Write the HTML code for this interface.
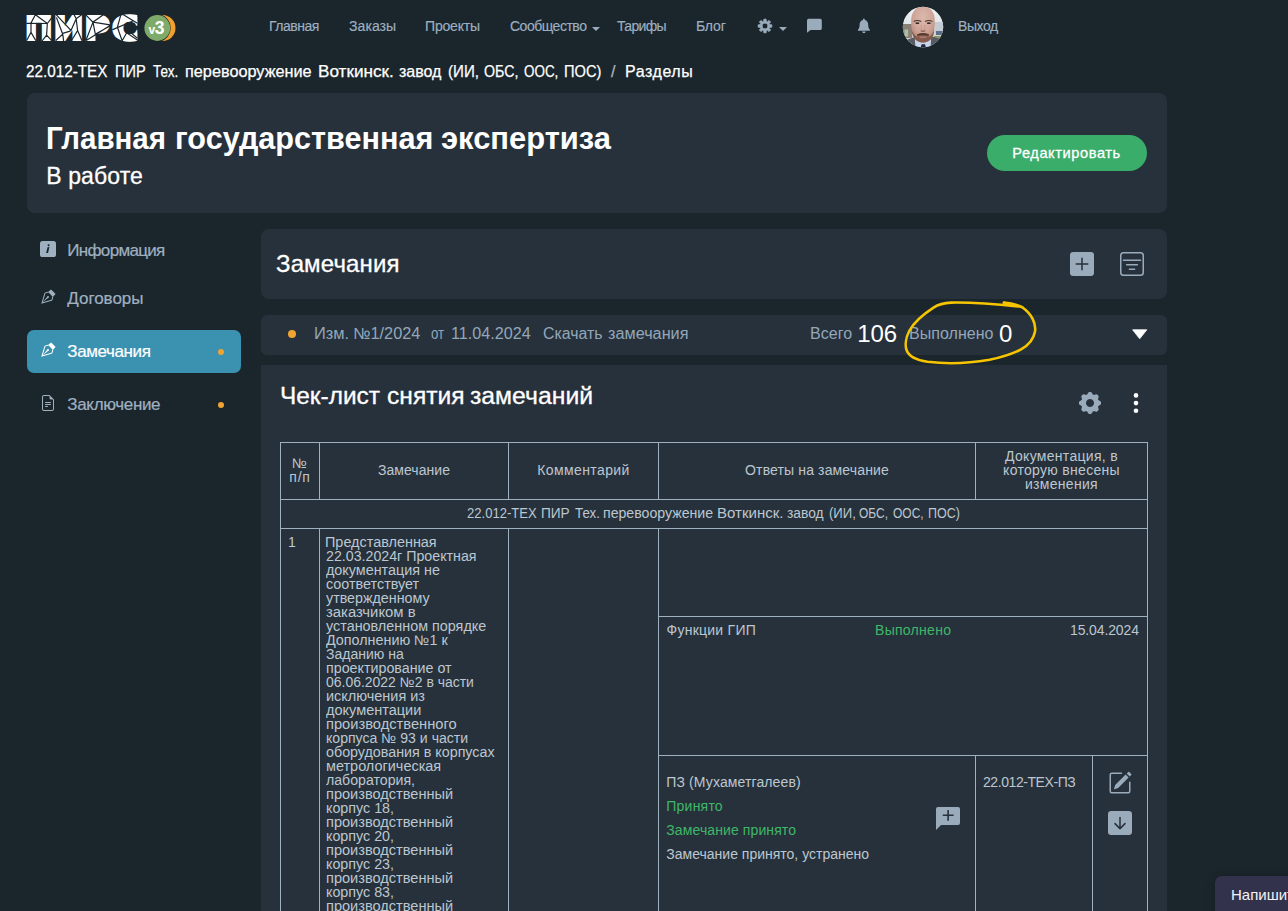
<!DOCTYPE html>
<html lang="ru">
<head>
<meta charset="utf-8">
<title>ПИРС — Замечания</title>
<style>
*{box-sizing:border-box;margin:0;padding:0}
html,body{width:1288px;height:911px;overflow:hidden;background:#1b262c}
body{position:relative;font-family:"Liberation Sans",sans-serif;color:#fff;font-size:14px}
.abs{position:absolute;white-space:nowrap}
.panel{position:absolute;background:#27313b}
/* nav */
.nav a{position:absolute;top:18px;font-size:14px;line-height:17px;color:#9db0c2;-webkit-text-stroke:0.15px #9db0c2;text-decoration:none;white-space:nowrap}
.ico{position:absolute;overflow:visible}
/* breadcrumb */
.bc{-webkit-text-stroke:0.25px currentColor;position:absolute;top:61.6px;font-size:16px;line-height:19px;color:#fff;white-space:nowrap}
/* sidebar */
.side{position:absolute;left:67.3px;-webkit-text-stroke:0.2px currentColor;font-size:17px;line-height:20px;color:#9fb0c0;white-space:nowrap}
.dot{position:absolute;border-radius:50%;background:#f0a233}
.wg{position:absolute;left:0;width:1288px;height:0;white-space:nowrap}
.wg span{position:absolute;top:0;white-space:nowrap;display:inline-block;transform-origin:0 0}
/* table */
.ln{position:absolute;display:block;background:#9fb0be}
.tx{position:absolute;font-size:14px;line-height:14px;color:#bcc7d1;white-space:nowrap}
.tc{text-align:center}
.gr{color:#3fb768}

</style>
</head>
<body>

<!-- NAV -->
<div class="nav" id="nav">
  <a id="n1" style="letter-spacing:-0.48px;left:269px">Главная</a>
  <a id="n2" style="letter-spacing:0.08px;left:349px">Заказы</a>
  <a id="n3" style="letter-spacing:-0.18px;left:425px">Проекты</a>
  <a id="n4" style="letter-spacing:-0.49px;left:510px">Сообщество</a>
  <a id="n5" style="letter-spacing:-0.66px;left:617px">Тарифы</a>
  <a id="n6" style="letter-spacing:-0.17px;left:696px">Блог</a>
  <a id="n7" style="letter-spacing:-0.43px;left:958px">Выход</a>
</div>

<!-- BREADCRUMB -->
<div class="bc" id="bc2" style="left:611px;color:#aab6c1">/</div>
<div class="bc" id="bc3" style="letter-spacing:0.55px;left:625px">Разделы</div>

<!-- HEADER PANEL -->
<div class="panel" style="left:27px;top:93px;width:1140px;height:120px;border-radius:8px"></div>
<div class="abs" id="h2" style="-webkit-text-stroke:0.3px #fff;letter-spacing:0.1px;left:46.3px;top:162.8px;font-size:23px;line-height:26px">В работе</div>
<div class="abs" id="btn" style="letter-spacing:0.6px;-webkit-text-stroke:0.3px #fff;left:987px;top:135px;width:160px;height:36px;border-radius:18px;background:#3bad6b;text-align:center;font-size:14.6px;line-height:37px;text-indent:-1px">Редактировать</div>

<!-- SIDEBAR -->
<div class="abs" style="left:27px;top:330px;width:214px;height:43px;border-radius:7px;background:#3a92b0"></div>
<div class="side" id="s1" style="letter-spacing:-0.68px;top:241px">Информация</div>
<div class="side" id="s2" style="letter-spacing:-0.03px;top:289px">Договоры</div>
<div class="side" id="s3" style="letter-spacing:-0.39px;top:342px;color:#fff">Замечания</div>
<div class="side" id="s4" style="letter-spacing:-0.34px;top:395px">Заключение</div>
<div class="dot" style="left:218px;top:349px;width:6px;height:6px"></div>
<div class="dot" style="left:218px;top:402px;width:6px;height:6px"></div>

<!-- ЗАМЕЧАНИЯ PANEL -->
<div class="panel" style="left:261px;top:229px;width:906px;height:70px;border-radius:8px"></div>
<div class="abs" id="p1" style="-webkit-text-stroke:0.3px #fff;letter-spacing:0.14px;left:276px;top:250px;font-size:24px;line-height:28px">Замечания</div>

<!-- ROW PANEL -->
<div class="panel" style="left:261px;top:315px;width:906px;height:40px;border-radius:6px"></div>
<div class="dot" style="left:288px;top:330px;width:8px;height:8px"></div>
<div class="abs" id="r4" style="letter-spacing:0.03px;left:810px;top:324px;font-size:16px;line-height:19px;color:#93a7ba">Всего</div>
<div class="abs" id="r5" style="letter-spacing:-0.10px;left:857.3px;top:320px;font-size:24px;line-height:28px">106</div>
<div class="abs" id="r6" style="letter-spacing:0.04px;left:909px;top:324px;font-size:16px;line-height:19px;color:#93a7ba">Выполнено</div>
<div class="abs" id="r7" style="letter-spacing:-0.70px;left:999px;top:320px;font-size:24px;line-height:28px">0</div>

<!-- CHECKLIST PANEL -->
<div class="panel" style="left:261px;top:365px;width:906px;height:560px"></div>


<!-- TABLE LINES -->
<div id="tlines">
<i class="ln" style="left:280px;top:442px;width:868px;height:1px"></i>
<i class="ln" style="left:280px;top:499px;width:868px;height:1px"></i>
<i class="ln" style="left:280px;top:528px;width:868px;height:1px"></i>
<i class="ln" style="left:658px;top:616px;width:490px;height:1px"></i>
<i class="ln" style="left:658px;top:755px;width:490px;height:1px"></i>
<i class="ln" style="left:280px;top:442px;width:1px;height:480px"></i>
<i class="ln" style="left:1147px;top:442px;width:1px;height:480px"></i>
<i class="ln" style="left:319px;top:442px;width:1px;height:58px"></i>
<i class="ln" style="left:508px;top:442px;width:1px;height:58px"></i>
<i class="ln" style="left:658px;top:442px;width:1px;height:58px"></i>
<i class="ln" style="left:975px;top:442px;width:1px;height:58px"></i>
<i class="ln" style="left:319px;top:528px;width:1px;height:400px"></i>
<i class="ln" style="left:508px;top:528px;width:1px;height:400px"></i>
<i class="ln" style="left:658px;top:528px;width:1px;height:400px"></i>
<i class="ln" style="left:975px;top:755px;width:1px;height:170px"></i>
<i class="ln" style="left:1092px;top:755px;width:1px;height:170px"></i>
</div>

<!-- TABLE TEXT -->
<div class="tx tc" id="t1" style="letter-spacing:0.80px;left:281px;top:456px;width:38px">№<br>п/п</div>
<div class="tx tc" id="t2" style="letter-spacing:0.04px;left:320px;top:463px;width:188px">Замечание</div>
<div class="tx tc" id="t3" style="letter-spacing:0.39px;left:509px;top:463px;width:149px">Комментарий</div>
<div class="tx tc" id="t4" style="letter-spacing:0.14px;left:659px;top:463px;width:316px">Ответы на замечание</div>
<div class="tx tc" id="t5" style="letter-spacing:0.30px;left:976px;top:449px;width:171px">Документация, в<br>которую внесены<br>изменения</div>
<div class="tx" id="t7" style="left:288px;top:535px">1</div>
<div class="tx" id="t9" style="letter-spacing:0.25px;left:666.5px;top:623px">Функции ГИП</div>
<div class="tx gr" id="t10" style="letter-spacing:0.29px;left:875px;top:623px">Выполнено</div>
<div class="tx" id="t11" style="letter-spacing:-0.12px;left:1070px;top:623px">15.04.2024</div>
<div class="tx" id="t12" style="margin-left:-0.7px;letter-spacing:0.12px;left:667px;top:775px">ПЗ (Мухаметгалеев)</div>
<div class="tx gr" id="t13" style="margin-left:-0.7px;letter-spacing:0.22px;left:667px;top:799px">Принято</div>
<div class="tx gr" id="t14" style="margin-left:-0.7px;letter-spacing:0.10px;left:667px;top:823px">Замечание принято</div>
<div class="tx" id="t15" style="margin-left:-0.7px;left:667px;top:847px">Замечание принято, устранено</div>
<div class="tx" id="t16" style="letter-spacing:-0.43px;left:983px;top:775px">22.012-ТЕХ-ПЗ</div>


<!-- WORDS -->
<div class="wg" id="bc" style="top:61.6px;font-size:16px;line-height:19px;color:#fff;-webkit-text-stroke:0.25px #fff">
<span id="bc_0" style="left:26.00px;top:0px;transform:scaleX(0.9535)">22.012-ТЕХ</span> 
<span id="bc_1" style="left:115.00px;top:0px;transform:scaleX(0.9100)">ПИР</span> 
<span id="bc_2" style="left:153.00px;top:0px;transform:scaleX(0.8439)">Тех.</span> 
<span id="bc_3" style="left:185.00px;top:0px;transform:scaleX(1.0160)">перевооружение</span> 
<span id="bc_4" style="left:318.00px;top:0px;transform:scaleX(1.0715)">Воткинск.</span> 
<span id="bc_5" style="left:399.00px;top:0px;transform:scaleX(1.0003)">завод</span> 
<span id="bc_6" style="left:448.00px;top:0px;transform:scaleX(0.9440)">(ИИ,</span> 
<span id="bc_7" style="left:483.50px;top:0px;transform:scaleX(0.8865)">ОБС,</span> 
<span id="bc_8" style="left:523.50px;top:0px;transform:scaleX(0.8392)">ООС,</span> 
<span id="bc_9" style="left:564.00px;top:0px;transform:scaleX(0.9149)">ПОС)</span> 
</div>
<div class="wg" id="h1" style="top:119.6px;font-size:31.5px;line-height:36px;font-weight:bold;color:#fff">
<span id="h1_0" style="left:46.00px;top:0px;transform:scaleX(0.9365)">Главная</span> 
<span id="h1_1" style="left:174.50px;top:0px;transform:scaleX(0.9717)">государственная</span> 
<span id="h1_2" style="left:441.00px;top:0px;transform:scaleX(0.9811)">экспертиза</span> 
</div>
<div class="wg" id="c1" style="top:382px;font-size:23.5px;line-height:28px;color:#fff;-webkit-text-stroke:0.3px #fff">
<span id="c1_0" style="left:279.50px;top:0px;transform:scaleX(1.0396)">Чек-лист</span> 
<span id="c1_1" style="left:386.50px;top:0px;transform:scaleX(1.0467)">снятия</span> 
<span id="c1_2" style="left:470.00px;top:0px;transform:scaleX(1.0530)">замечаний</span> 
</div>
<div class="wg" id="t6" style="top:506px;font-size:14px;line-height:14px;color:#bcc7d1">
<span id="t6_0" style="left:466.50px;top:0px;transform:scaleX(0.9333)">22.012-ТЕХ</span> 
<span id="t6_1" style="left:541.00px;top:0px;transform:scaleX(0.9746)">ПИР</span> 
<span id="t6_2" style="left:574.50px;top:0px;transform:scaleX(0.9527)">Тех.</span> 
<span id="t6_3" style="left:602.50px;top:0px;transform:scaleX(1.0093)">перевооружение</span> 
<span id="t6_4" style="left:716.50px;top:0px;transform:scaleX(1.0734)">Воткинск.</span> 
<span id="t6_5" style="left:787.00px;top:0px;transform:scaleX(0.9843)">завод</span> 
<span id="t6_6" style="left:828.50px;top:0px;transform:scaleX(0.9362)">(ИИ,</span> 
<span id="t6_7" style="left:859.00px;top:0px;transform:scaleX(0.8537)">ОБС,</span> 
<span id="t6_8" style="left:892.50px;top:0px;transform:scaleX(0.8552)">ООС,</span> 
<span id="t6_9" style="left:927.50px;top:0px;transform:scaleX(0.8928)">ПОС)</span> 
</div>
<div class="wg" id="t8" style="top:535px;font-size:14px;line-height:14px;color:#bcc7d1">
<span id="t8_0" style="left:325.00px;top:0px;transform:scaleX(1.0298)">Представленная</span> 
<span id="t8_1" style="left:326.00px;top:14px;transform:scaleX(1.0149)">22.03.2024г Проектная</span> 
<span id="t8_2" style="left:326.00px;top:28px;transform:scaleX(1.0251)">документация не</span> 
<span id="t8_3" style="left:326.00px;top:42px;transform:scaleX(1.0263)">соответствует</span> 
<span id="t8_4" style="left:326.00px;top:56px;transform:scaleX(1.0195)">утвержденному</span> 
<span id="t8_5" style="left:326.00px;top:70px;transform:scaleX(1.0619)">заказчиком в</span> 
<span id="t8_6" style="left:326.00px;top:84px;transform:scaleX(1.0268)">установленном порядке</span> 
<span id="t8_7" style="left:326.00px;top:98px;transform:scaleX(1.0233)">Дополнению №1 к</span> 
<span id="t8_8" style="left:326.00px;top:112px;transform:scaleX(1.0026)">Заданию на</span> 
<span id="t8_9" style="left:326.00px;top:126px;transform:scaleX(1.0196)">проектирование от</span> 
<span id="t8_10" style="left:326.00px;top:140px;transform:scaleX(0.9973)">06.06.2022 №2 в части</span> 
<span id="t8_11" style="left:326.00px;top:154px;transform:scaleX(1.0334)">исключения из</span> 
<span id="t8_12" style="left:326.00px;top:168px;transform:scaleX(1.0370)">документации</span> 
<span id="t8_13" style="left:326.00px;top:182px;transform:scaleX(1.0481)">производственного</span> 
<span id="t8_14" style="left:326.00px;top:196px;transform:scaleX(1.0057)">корпуса № 93 и части</span> 
<span id="t8_15" style="left:326.00px;top:210px;transform:scaleX(1.0206)">оборудования в корпусах</span> 
<span id="t8_16" style="left:326.00px;top:224px;transform:scaleX(1.0324)">метрологическая</span> 
<span id="t8_17" style="left:326.00px;top:238px;transform:scaleX(1.0092)">лаборатория,</span> 
<span id="t8_18" style="left:326.00px;top:252px;transform:scaleX(1.0414)">производственный</span> 
<span id="t8_19" style="left:326.00px;top:266px;transform:scaleX(1.0212)">корпус 18,</span> 
<span id="t8_20" style="left:326.00px;top:280px;transform:scaleX(1.0414)">производственный</span> 
<span id="t8_21" style="left:326.00px;top:294px;transform:scaleX(1.0212)">корпус 20,</span> 
<span id="t8_22" style="left:326.00px;top:308px;transform:scaleX(1.0414)">производственный</span> 
<span id="t8_23" style="left:326.00px;top:322px;transform:scaleX(1.0212)">корпус 23,</span> 
<span id="t8_24" style="left:326.00px;top:336px;transform:scaleX(1.0414)">производственный</span> 
<span id="t8_25" style="left:326.00px;top:350px;transform:scaleX(1.0212)">корпус 83,</span> 
<span id="t8_26" style="left:326.00px;top:364px;transform:scaleX(1.0414)">производственный</span> 
</div>
<div class="wg" id="r1" style="top:324px;font-size:16px;line-height:19px;color:#93a7ba">
<span id="r1_0" style="left:313.50px;top:0px;transform:scaleX(1.0254)">Изм.</span> 
<span id="r1_1" style="left:352.50px;top:0px;transform:scaleX(1.0185)">№1/2024</span> 
<span id="r1_2" style="left:431.00px;top:0px;transform:scaleX(0.8266)">от</span> 
<span id="r1_3" style="left:451.00px;top:0px;transform:scaleX(1.0103)">11.04.2024</span> 
<span id="r1_4" style="left:543.00px;top:0px;transform:scaleX(0.9901)">Скачать</span> 
<span id="r1_5" style="left:608.00px;top:0px;transform:scaleX(1.0154)">замечания</span> 
</div>
<!-- /WORDS -->

<!-- ICON OVERLAY -->
<svg class="ico" id="ov" width="1288" height="911" viewBox="0 0 1288 911" style="left:0;top:0;pointer-events:none">
  <!-- logo -->
  <clipPath id="cclip"><rect x="110" y="10" width="27.3" height="36"/></clipPath>
  <g id="logo" font-family="Liberation Sans, sans-serif" font-weight="bold" font-size="30.9" fill="#fff" stroke="#fff" stroke-width="3.8" stroke-linejoin="miter">
    <text transform="translate(26.60,39.00) scale(1.1063,1.0316)">П</text>
    <text transform="translate(55.30,39.00) scale(1.2048,1.0316)">И</text>
    <text transform="translate(86.00,39.00) scale(1.1043,1.0316)">Р</text>
    <g clip-path="url(#cclip)"><text transform="translate(112.70,40.30) scale(1.4472,1.1336)" stroke-width="3.1">С</text></g>
  </g>
  <rect x="94.5" y="21.3" width="8" height="5" fill="#fff"/>
  <g id="mosaic" stroke="#1b262c" stroke-width="1.2" fill="none" stroke-linecap="round">
    <path d="M26.8,23.4L47.3,23.5 M31,23L35.4,14.7L47.3,23.5L51.5,18.2 M31,23.3L31,32.4L26.8,40.3 M31,32.4L35.6,40.3 M47.3,23.5L46.6,35.2L42.4,40.5 M46.6,35.2L51.5,40.3"/>
    <path d="M56.6,15.1L71,30.5L76.2,18.8L74.1,14.7 M56.6,17.9L62.7,34.2L56.1,40.3 M62.7,34.2L63.6,40.7 M62.7,33.3L70.1,31.2 M76.2,18.8L81.3,15.1 M76.2,18.8L77.6,30.5L72,39.8 M77.6,30.5L81.8,40.3"/>
    <path d="M86,15.1L93,22.1L103,15.1 M93,22.1L110,24.9 M93,22.1L86.2,39.8 M93,22.1L95.5,35.2 M110,25.4L86.7,40.3 M96.5,33.6L109.5,26.2"/>
    <path d="M112.7,29.6L132.3,21.2 M120.9,14.7L117.4,27.2L122.1,40.7L126.7,32.8L137,39.8 M123,14.4L137,23 M130.9,32.8L137,37.9"/>
  </g>
  <!-- v3 badge -->
  <circle cx="162.5" cy="28" r="13" fill="#f0a030"/>
  <circle cx="156.6" cy="28" r="14" fill="#1b262c"/>
  <circle cx="157.3" cy="28" r="12.9" fill="#7fab6a"/>
  <text x="156.4" y="34.2" letter-spacing="-0.4" text-anchor="middle" font-family="Liberation Sans, sans-serif" font-weight="bold" fill="#fff"><tspan font-size="12">v</tspan><tspan font-size="17.5">3</tspan></text>

  <!-- nav icons -->
  <g fill="#9aabbb">
    <path d="M592,27h8l-4,4z"/>
    <path d="M779,27h8l-4,4z"/>
    <path fill-rule="evenodd" d="M763.79,21.15 L763.87,19.19 L766.13,19.19 L766.21,21.15 L767.58,21.72 L769.01,20.39 L770.61,21.99 L769.28,23.42 L769.85,24.79 L771.81,24.87 L771.81,27.13 L769.85,27.21 L769.28,28.58 L770.61,30.01 L769.01,31.61 L767.58,30.28 L766.21,30.85 L766.13,32.81 L763.87,32.81 L763.79,30.85 L762.42,30.28 L760.99,31.61 L759.39,30.01 L760.72,28.58 L760.15,27.21 L758.19,27.13 L758.19,24.87 L760.15,24.79 L760.72,23.42 L759.39,21.99 L760.99,20.39 L762.42,21.72Z M765,23.1a2.9,2.9 0 1 0 0.01,0z" stroke="#9aabbb" stroke-width="0.9" stroke-linejoin="round"/>
    <path d="M808.6,18.8h11.6a1.6,1.6 0 0 1 1.6,1.6v8a1.6,1.6 0 0 1 -1.6,1.6h-9.6l-3.6,2.8v-12.4a1.6,1.6 0 0 1 1.6,-1.6z"/>
    <path d="M863.9,18.6a0.9,0.9 0 0 1 0.9,0.9v0.6c2.2,0.5 3.4,2.4 3.4,4.6c0,2.7 0.7,3.9 1.5,4.7c0.5,0.5 0.2,1.3 -0.6,1.3h-10.4c-0.8,0 -1.1,-0.8 -0.6,-1.3c0.8,-0.8 1.5,-2 1.5,-4.7c0,-2.2 1.2,-4.1 3.4,-4.6v-0.6a0.9,0.9 0 0 1 0.9,-0.9z M862.2,31.6h3.4a1.7,1.6 0 0 1 -3.4,0z"/>
  </g>

  <!-- avatar -->
  <defs>
    <clipPath id="avc"><circle cx="923" cy="27" r="20.2"/></clipPath>
    <linearGradient id="avbg" x1="0" y1="0" x2="0" y2="1"><stop offset="0" stop-color="#f1f4f7"/><stop offset="0.5" stop-color="#dfe3e6"/><stop offset="1" stop-color="#b9bbb4"/></linearGradient>
    <radialGradient id="avface" cx="0.5" cy="0.3" r="0.75"><stop offset="0" stop-color="#dcb8ad"/><stop offset="0.55" stop-color="#cfa598"/><stop offset="1" stop-color="#a87c6c"/></radialGradient>
  </defs>
  <g clip-path="url(#avc)">
    <rect x="902" y="6" width="42" height="42" fill="url(#avbg)"/>
    <rect x="902" y="24" width="10" height="14" fill="#8c7f76"/>
    <rect x="904.5" y="29.5" width="3.6" height="7" fill="#a9c0a4"/>
    <rect x="902" y="38" width="12" height="6" fill="#cfcfca"/>
    <rect x="935" y="22" width="10" height="12" fill="#c3ccd4"/>
    <rect x="936" y="31" width="9" height="4" fill="#5d6f8a"/>
    <rect x="934" y="36" width="11" height="6" fill="#8e9c6c"/>
    <path d="M902,48 L902,42 L907,39.8 L915,37 L931,36.2 L940,38.8 L944,41 L944,48Z" fill="#595b64"/>
    <path d="M915.5,48 L914.8,38.5 L931.2,38 L930.6,48Z" fill="#c7d4ea"/>
    <path d="M920.6,48 L921.6,44.2 L925,44.2 L926,48Z" fill="#1d2740"/>
    <path d="M911.2,22 C911,12 915.5,6.6 923,6.6 C930.5,6.6 935,12 934.8,22 C934.8,32 932.5,42.6 923,42.6 C913.5,42.6 911.2,32 911.2,22Z" fill="url(#avface)"/>
    <path d="M911.6,30 Q912.5,42 923,42.6 Q933.5,42 934.4,30 Q931.5,36 928.5,36.6 L923,33 L917.5,36.6 Q914.5,36 911.6,30Z" fill="#7a5040" opacity="0.8"/>
    <path d="M916.8,34.4 Q923,31.6 929.2,34.4 L928.6,36 Q923,34.4 917.4,36Z" fill="#5a3a2e"/>
    <path d="M919.5,36.8 Q923,37.8 926.5,36.8" stroke="#b98a80" stroke-width="1.1" fill="none"/>
    <path d="M913.6,21.4 Q917.5,19.6 921.2,21.6" stroke="#4a3630" stroke-width="1.1" fill="none"/>
    <path d="M925,21.6 Q928.6,19.6 932.4,21.4" stroke="#4a3630" stroke-width="1.1" fill="none"/>
    <ellipse cx="917.4" cy="23.2" rx="2" ry="0.9" fill="#3b2f2c"/>
    <ellipse cx="928.8" cy="23.2" rx="2" ry="0.9" fill="#3b2f2c"/>
    <path d="M921.4,25 Q920.4,30 923,30.6 Q925.6,30 924.6,25" stroke="#b88c7d" stroke-width="0.8" fill="none" opacity="0.7"/>
    <path d="M920.6,30.8 Q923,32 925.4,30.8" stroke="#7c5446" stroke-width="1" fill="none"/>
  </g>

  <!-- sidebar icons -->
  <rect x="40" y="241" width="16" height="16" rx="2.6" fill="#9fb0c0"/>
  <path d="M48.6,244.2a0.95,0.95 0 1 0 0.01,0z M47.5,247.2l1.9,-0.3l-1.35,6.1h-1.9z" fill="#1b262c"/>
  <g transform="translate(40,289)" fill="#9fb0c0"><path fill-rule="evenodd" d="M10.646.646a.5.5 0 0 1 .708 0l4 4a.5.5 0 0 1 0 .708l-1.902 1.902-.829 3.313a1.5 1.5 0 0 1-1.024 1.073L1.254 14.746 4.358 4.4A1.5 1.5 0 0 1 5.43 3.377l3.313-.828L10.646.646zm-1.8 2.908-3.173.793a.5.5 0 0 0-.358.342l-2.57 8.565 8.567-2.57a.5.5 0 0 0 .34-.357l.794-3.174-3.6-3.6z"/><path fill-rule="evenodd" d="M2.832 13.228 8 9a1 1 0 1 0-1-1l-4.228 5.168-.026.086.086-.026z"/><path d="M8.85 3.55 11 1.4 14.6 5 12.45 7.15z"/></g>
  <g transform="translate(40,342)" fill="#fff"><path fill-rule="evenodd" d="M10.646.646a.5.5 0 0 1 .708 0l4 4a.5.5 0 0 1 0 .708l-1.902 1.902-.829 3.313a1.5 1.5 0 0 1-1.024 1.073L1.254 14.746 4.358 4.4A1.5 1.5 0 0 1 5.43 3.377l3.313-.828L10.646.646zm-1.8 2.908-3.173.793a.5.5 0 0 0-.358.342l-2.57 8.565 8.567-2.57a.5.5 0 0 0 .34-.357l.794-3.174-3.6-3.6z"/><path fill-rule="evenodd" d="M2.832 13.228 8 9a1 1 0 1 0-1-1l-4.228 5.168-.026.086.086-.026z"/><path d="M8.85 3.55 11 1.4 14.6 5 12.45 7.15z"/></g>
  <g transform="translate(40,395)" fill="#9fb0c0"><path d="M5.5 7a.5.5 0 0 0 0 1h5a.5.5 0 0 0 0-1h-5zM5 9.5a.5.5 0 0 1 .5-.5h5a.5.5 0 0 1 0 1h-5a.5.5 0 0 1-.5-.5zm0 2a.5.5 0 0 1 .5-.5h2a.5.5 0 0 1 0 1h-2a.5.5 0 0 1-.5-.5z"/><path d="M9.5 0H4a2 2 0 0 0-2 2v12a2 2 0 0 0 2 2h8a2 2 0 0 0 2-2V4.5L9.5 0zm0 1v2A1.5 1.5 0 0 0 11 4.5h2V14a1 1 0 0 1-1 1H4a1 1 0 0 1-1-1V2a1 1 0 0 1 1-1h5.5z"/></g>

  <!-- plus & filter -->
  <rect x="1070" y="252" width="24" height="24" rx="3.2" fill="#9aabbb"/>
  <path d="M1076.2,264h11.6M1082,258.2v11.6" stroke="#27313b" stroke-width="1.5" stroke-linecap="round"/>
  <rect x="1120.75" y="252.75" width="22.5" height="22.5" rx="2.8" fill="none" stroke="#9aabbb" stroke-width="1.5"/>
  <path d="M1123.5,260.2h17M1126.6,264.8h10.8M1129.4,269.2h5.2" stroke="#9aabbb" stroke-width="1.5" stroke-linecap="round"/>

  <!-- row triangle -->
  <path d="M1132.6,329.8h14.2l-7.1,9z" fill="#fff" stroke="#fff" stroke-width="0.8" stroke-linejoin="round"/>

  <!-- gear + dots -->
  <path fill-rule="evenodd" d="M1087.53,395.39 L1089.12,392.84 L1090.88,392.84 L1092.47,395.39 L1093.63,395.87 L1096.56,395.19 L1097.81,396.44 L1097.13,399.37 L1097.61,400.53 L1100.16,402.12 L1100.16,403.88 L1097.61,405.47 L1097.13,406.63 L1097.81,409.56 L1096.56,410.81 L1093.63,410.13 L1092.47,410.61 L1090.88,413.16 L1089.12,413.16 L1087.53,410.61 L1086.37,410.13 L1083.44,410.81 L1082.19,409.56 L1082.87,406.63 L1082.39,405.47 L1079.84,403.88 L1079.84,402.12 L1082.39,400.53 L1082.87,399.37 L1082.19,396.44 L1083.44,395.19 L1086.37,395.87Z M1090,398.1a4.9,4.9 0 1 0 0.01,0z" fill="#9aabbb" stroke="#9aabbb" stroke-width="1.7" stroke-linejoin="round"/>
  <circle cx="1136" cy="395.4" r="2.3" fill="#fff"/><circle cx="1136" cy="403.1" r="2.3" fill="#fff"/><circle cx="1136" cy="410.7" r="2.3" fill="#fff"/>

  <!-- table icons -->
  <path d="M938,807h20a2,2 0 0 1 2,2v14a2,2 0 0 1 -2,2h-17l-5,5v-21a2,2 0 0 1 2,-2z" fill="#9aabbb"/>
  <path d="M942.8,815.3h10.8M948.1,810v10.7" stroke="#27313b" stroke-width="1.6"/>
  <g transform="translate(1108,771) scale(1.5)" fill="#9aabbb"><path d="M15.502 1.94a.5.5 0 0 1 0 .706L14.459 3.69l-2-2L13.502.646a.5.5 0 0 1 .707 0l1.293 1.293zm-1.75 2.456-2-2L4.939 9.21a.5.5 0 0 0-.121.196l-.805 2.414a.25.25 0 0 0 .316.316l2.414-.805a.5.5 0 0 0 .196-.12l6.813-6.814z"/><path fill-rule="evenodd" d="M1 13.5A1.5 1.5 0 0 0 2.5 15h11a1.5 1.5 0 0 0 1.5-1.5v-6a.5.5 0 0 0-1 0v6a.5.5 0 0 1-.5.5h-11a.5.5 0 0 1-.5-.5v-11a.5.5 0 0 1 .5-.5H9a.5.5 0 0 0 0-1H2.5A1.5 1.5 0 0 0 1 2.5v11z"/></g>
  <rect x="1108" y="811" width="24" height="24" rx="3.2" fill="#9aabbb"/>
  <path d="M1120,817.4v10.8M1115,823.6l5,5l5,-5" stroke="#27313b" stroke-width="1.5" fill="none" stroke-linecap="round" stroke-linejoin="round"/>

  <!-- hand-drawn highlight -->
  <path d="M1023,307.6 C1017,304.6 1011,303.2 1003.8,302.6 C1010,303.6 1017,305.2 1021.5,306.8 C1000,304.4 975,302.2 951,302.6 C944,302.9 939,304 933.5,307.6 C924,313.8 914,322 909.2,331 C906,337.5 904.8,345.5 906.6,350.2 C909,356.4 917,360.2 927.5,361.8 C945,364 970,363.2 989.5,359.8 C1003,357 1014,353.2 1021,349.4 C1029,345 1033.6,339.4 1035,331.5 C1036.2,323.5 1032,314 1021.5,306.8" fill="none" stroke="#f6c500" stroke-width="2.6" stroke-linecap="round" stroke-linejoin="round"/>
</svg>

<!-- CHAT WIDGET -->
<div class="abs" style="left:1215px;top:876px;width:90px;height:50px;border-radius:7px;background:#33324d;box-shadow:0 0 10px rgba(0,0,0,.25)"></div>
<div class="abs" id="w1" style="left:1231px;top:886px;font-size:15px;line-height:18px;color:#f2f2f5">Напишите нам</div>

</body>
</html>
